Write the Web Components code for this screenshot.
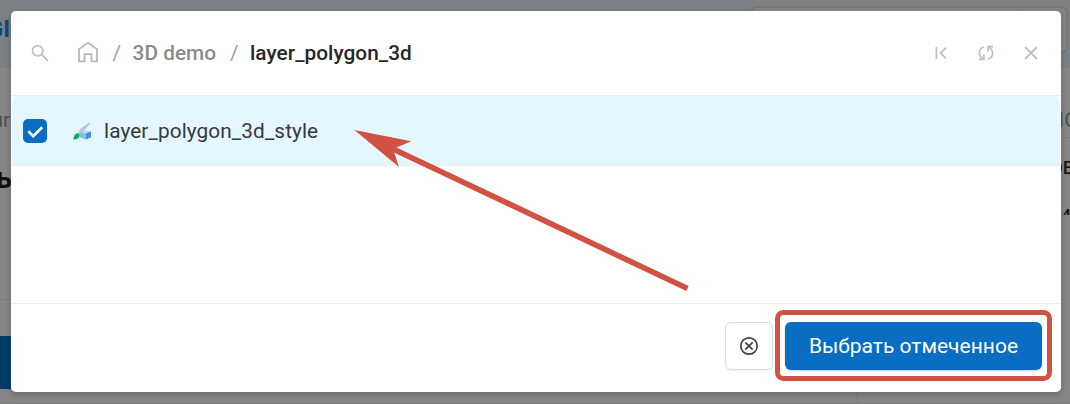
<!DOCTYPE html>
<html lang="ru">
<head>
<meta charset="utf-8">
<title>Выбор стиля</title>
<style>
html,body{margin:0;height:100%;overflow:hidden}
body{font-family:Roboto,"Liberation Sans",sans-serif}
</style>
</head>
<body>
<picker-app></picker-app>
<script>
const define = (name, html) => customElements.define(name, class extends HTMLElement {
  constructor() {
    super();
    this.attachShadow({mode: 'open'}).innerHTML = html;
  }
});

define('dimmed-page', `
<style>
:host{display:block;position:absolute;inset:0;background:#868686;overflow:hidden}
.band{position:absolute;left:0;top:0;width:100%;height:68px;background:#7b8184}
.t{position:absolute;white-space:nowrap;line-height:24px}
.field{position:absolute;left:751px;top:6px;width:317px;height:47px;box-sizing:border-box;border:2px solid #777;border-radius:6px;background:#868686}
.l{position:absolute;background:#7c7c7c}
.btn{position:absolute;left:0;top:336px;width:30px;height:53px;background:#023a69}
</style>
<div class="band"></div><div class="field"></div>
<div class="l" style="left:1021px;top:7px;width:1px;height:10px"></div>
<div class="l" style="left:0;top:299px;width:12px;height:1px"></div>
<div class="l" style="left:857px;top:380px;width:1px;height:24px"></div>
<div class="l" style="left:1050px;top:137px;width:20px;height:1px"></div>
<div class="l" style="left:0;top:403px;width:1070px;height:1px"></div>
<div class="btn"></div>
<span class="t" style="right:1060px;top:18px;font-size:23px;font-weight:700;color:#0a4a7c">GI</span>
<span class="t" style="right:1060px;top:108px;font-size:20.800px;color:#4b5054">ur</span>
<span class="t" style="right:1058px;top:166px;font-size:29px;font-weight:700;color:#111">ь</span>
<span class="t" style="left:1058.500px;top:108px;font-size:20.800px;color:#4b5054">IC</span>
<span class="t" style="left:1050px;top:156px;font-size:18.500px;font-weight:500;color:#191919">ОЕ</span>
<span class="t" style="left:1061px;top:204px;height:11px;overflow:hidden;font-size:18px;font-weight:500;color:#191919">4С</span>
`);

define('modal-dialog', `
<style>
:host{position:absolute;left:11px;top:11px;width:1049.500px;height:380.500px;box-sizing:border-box;display:flex;flex-direction:column;background:#fff;border-radius:5px;box-shadow:0 0 1px #aaa,0 2px 6px #0004;overflow:visible}
.body{flex:1;border-top:1px solid #edf0f1}
</style>
<slot name="header"></slot><div class="body"><slot></slot></div><slot name="footer"></slot>
`);

define('path-header', `
<style>
:host{display:flex;align-items:center;height:84px;box-sizing:border-box;padding:0 21px 0 20px;color:#bdc2c5}
svg{display:block;flex:none}
.crumbs{display:flex;align-items:center;margin-left:27.500px;flex:1;font-size:20.800px;font-weight:500;line-height:24px;color:#8b8b8b}
.home{color:#b6bbbf}
.sep{color:#a0a0a0;font-weight:400;margin:0 11.500px 0 14px}
.cur{color:#262626;letter-spacing:.04px}
.tools{display:flex;gap:27px}
</style>
<svg width="18" height="18" viewBox="0 0 18 18" fill="none" stroke="currentColor"><circle cx="6.700" cy="6.700" r="5.100" stroke-width="1.900"/><path d="M10.400 10.400L17 17" stroke-width="2"/></svg>
<div class="crumbs">
<svg class="home" width="22" height="24" viewBox="0 0 22 24" fill="none" stroke="currentColor" stroke-width="1.800"><path d="M2 20.400V8.200L11 1.600l9 6.600v12.200h-5.600v-7.200H7.600v7.200z"/></svg>
<span class="sep">/</span><span>3D demo</span><span class="sep">/</span><span class="cur">layer_polygon_3d</span>
</div>
<div class="tools">
<svg width="18" height="18" viewBox="0 0 18 18" fill="none" stroke="currentColor" stroke-width="1.800"><path d="M4.400 3v12M14 3.600L8.600 9l5.400 5.400"/></svg>
<svg width="18" height="18" viewBox="0 0 18 18" fill="none" stroke="currentColor" stroke-width="1.700"><path d="M7 3C1.500 4.500.8 10.500 5.500 14.600M2 15.400h4.800v-5M11 15C16.500 13.500 17.200 7.500 12.500 3.400M16 2.600h-4.800v5"/></svg>
<svg width="18" height="18" viewBox="0 0 18 18" fill="none" stroke="currentColor" stroke-width="1.800"><path d="M3 3l12 12M15 3L3 15"/></svg>
</div>
`);

define('resource-row', `
<style>
:host{display:flex;align-items:center;height:70px;box-sizing:border-box;border-bottom:1px solid #e7eff2;background:#e4f6fe;border-radius:5px 5px 0 0;padding-left:11.400px;font-size:20.800px;color:#373a3c;margin:0 1px}
.check{display:flex;width:24px;height:24px;border-radius:5px;background:#096dc1}
.icon{margin:0 13px 0 26px}
svg{display:block}
</style>
<span class="check"><svg width="24" height="24" viewBox="0 0 24 24"><path d="M5.300 12.300l4.900 4.900 9-9" fill="none" stroke="#fff" stroke-width="2.700"/></svg></span>
<svg class="icon" width="18" height="18" viewBox="0 0 18 18"><path d="M16.600.2L8.200 6.200 5 10.200l2.600 2.200L17.200 1.600z" fill="#b2c7e4"/><path d="M0 17.300c1.200-.5.6-5.500 4-6 2.800-.2 3.500 2.600 1.800 4.400C4.400 17.300 2 17.600 0 17.300z" fill="#09af67"/><path d="M6.500 9.900l5.300-1.500 6.200 1.100-5.200 1.900z" fill="#b5d4f1"/><path d="M6.500 9.900l6.300 1.500v6.200L6.500 15.200z" fill="#8fbbe6"/><path d="M12.800 11.400l5.200-1.900v6l-5.200 2.100z" fill="#3b94da"/></svg>
<slot></slot>
`);

define('dialog-footer', `
<style>
:host{display:flex;justify-content:flex-end;align-items:flex-start;height:88.500px;box-sizing:border-box;border-top:1px solid #eee;padding:18px 18.500px 0 0;gap:12px}
button{box-sizing:border-box;height:48px;border-radius:6px;margin:0;padding:0;font:21px Roboto,"Liberation Sans",sans-serif}
.cancel{width:48px;border:1px solid #dedede;background:#fff;display:flex;align-items:center;justify-content:center;box-shadow:0 1px 2px #0001}
.ok{width:257px;border:0;background:#096dc1;color:#fff;box-shadow:0 1px 2px #0003}
</style>
<button class="cancel"><svg width="20" height="20" viewBox="0 0 20 20" fill="none" stroke="#414141" stroke-width="1.700"><circle cx="10" cy="10" r="8.200"/><path d="M6.300 6.300l7.400 7.400M13.700 6.300l-7.400 7.400"/></svg></button>
<button class="ok"><slot></slot></button>
`);

define('callout-marks', `
<style>
:host{position:absolute;inset:0;pointer-events:none}
svg{display:block}
</style>
<svg width="1070" height="404"><path d="M392 148.500L687.500 288.500" stroke="#d15142" stroke-width="5.600"/><path d="M354.300 130L411.300 141.300 396.500 147.500 394 152 399 167z" fill="#d15142"/><rect x="777.500" y="312.500" width="272" height="66" rx="6" fill="none" stroke="#d15142" stroke-width="5"/></svg>
`);

define('picker-app', `
<style>
:host{display:block;position:relative;width:1070px;height:404px;overflow:hidden}
.name{letter-spacing:.08px;margin-left:-.3px}
</style>
<dimmed-page></dimmed-page>
<modal-dialog>
<path-header slot="header"></path-header>
<resource-row><span class="name">layer_polygon_3d_style</span></resource-row>
<dialog-footer slot="footer">Выбрать отмеченное</dialog-footer>
</modal-dialog>
<callout-marks></callout-marks>
`);
</script>
</body>
</html>
